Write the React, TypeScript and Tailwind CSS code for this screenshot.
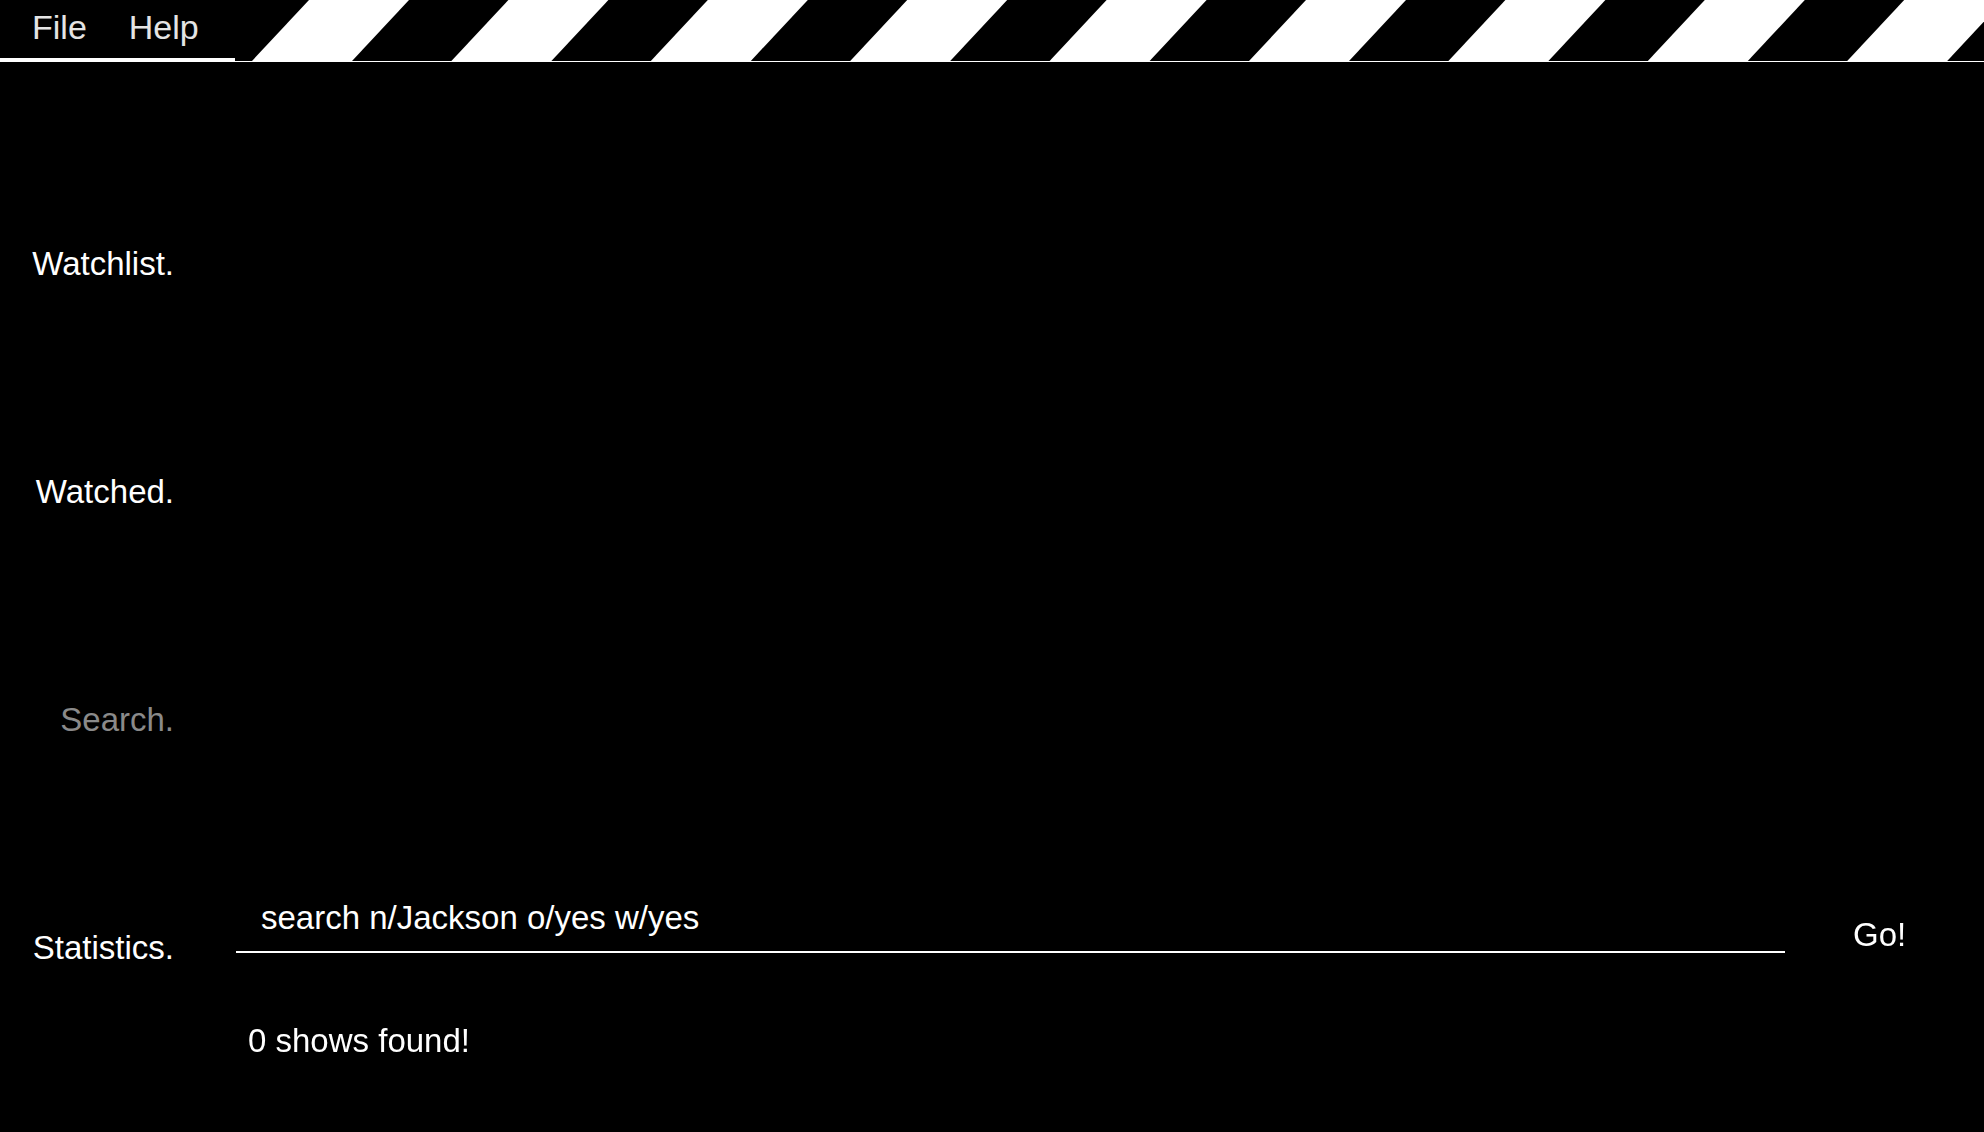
import { useEffect, useRef } from "react";

const stripes = Array.from({ length: 10 }, (_, i) => 17 + i * 199.4);

const tabs = ["Watchlist.", "Watched.", "Search.", "Statistics."];

function Clapper() {
  return (
    <div className="flex-1 h-[62px] border-b border-white overflow-hidden">
      <svg width="1760" height="61" viewBox="0 0 1760 61" className="block">
        {stripes.map((x) => (
          <polygon
            key={x}
            points={`${x},61 ${x + 100},61 ${x + 157},0 ${x + 57},0`}
            fill="#ffffff"
          />
        ))}
      </svg>
    </div>
  );
}

export default function App() {
  const box = useRef<HTMLInputElement>(null);

  useEffect(() => {
    const el = box.current;
    if (!el) return;
    el.focus();
    el.setSelectionRange(el.value.length, el.value.length);
  }, []);

  return (
    <div className="h-screen w-full bg-black text-white flex flex-col overflow-hidden font-['Liberation_Sans',Arial,sans-serif] text-[33px] leading-[38px]">
      {/* top bar */}
      <div className="flex h-[62px] shrink-0">
        <div className="w-[235px] h-[62px] border-b-4 border-white flex gap-[42px] pl-[32px] pt-[8px] text-[#e4e4e4] text-[34px]">
          <span>File</span>
          <span>Help</span>
        </div>
        <Clapper />
      </div>

      <div className="flex flex-1">
        {/* sidebar */}
        <div className="w-[236px] pt-[88px] pr-[62px] flex flex-col">
          {tabs.map((t) => (
            <div
              key={t}
              className={
                t === "Search."
                  ? "h-[228px] flex items-center justify-end text-[#8a8a8a]"
                  : "h-[228px] flex items-center justify-end"
              }
            >
              {t}
            </div>
          ))}
        </div>

        {/* main */}
        <div className="flex-1 flex flex-col">
          <div className="flex-1" />
          <div className="flex items-start">
            <div className="w-[1549px] border-b-2 border-white pb-[14px]">
              <input
                ref={box}
                className="w-full h-[38px] bg-transparent outline-none pl-[25px] text-white caret-white"
                defaultValue="search n/Jackson o/yes w/yes"
              />
            </div>
            <button className="ml-[68px] mt-[17px] text-white">Go!</button>
          </div>
          <div className="mt-[68px] pl-[12px] h-[110px]">0 shows found!</div>
        </div>
      </div>
    </div>
  );
}
